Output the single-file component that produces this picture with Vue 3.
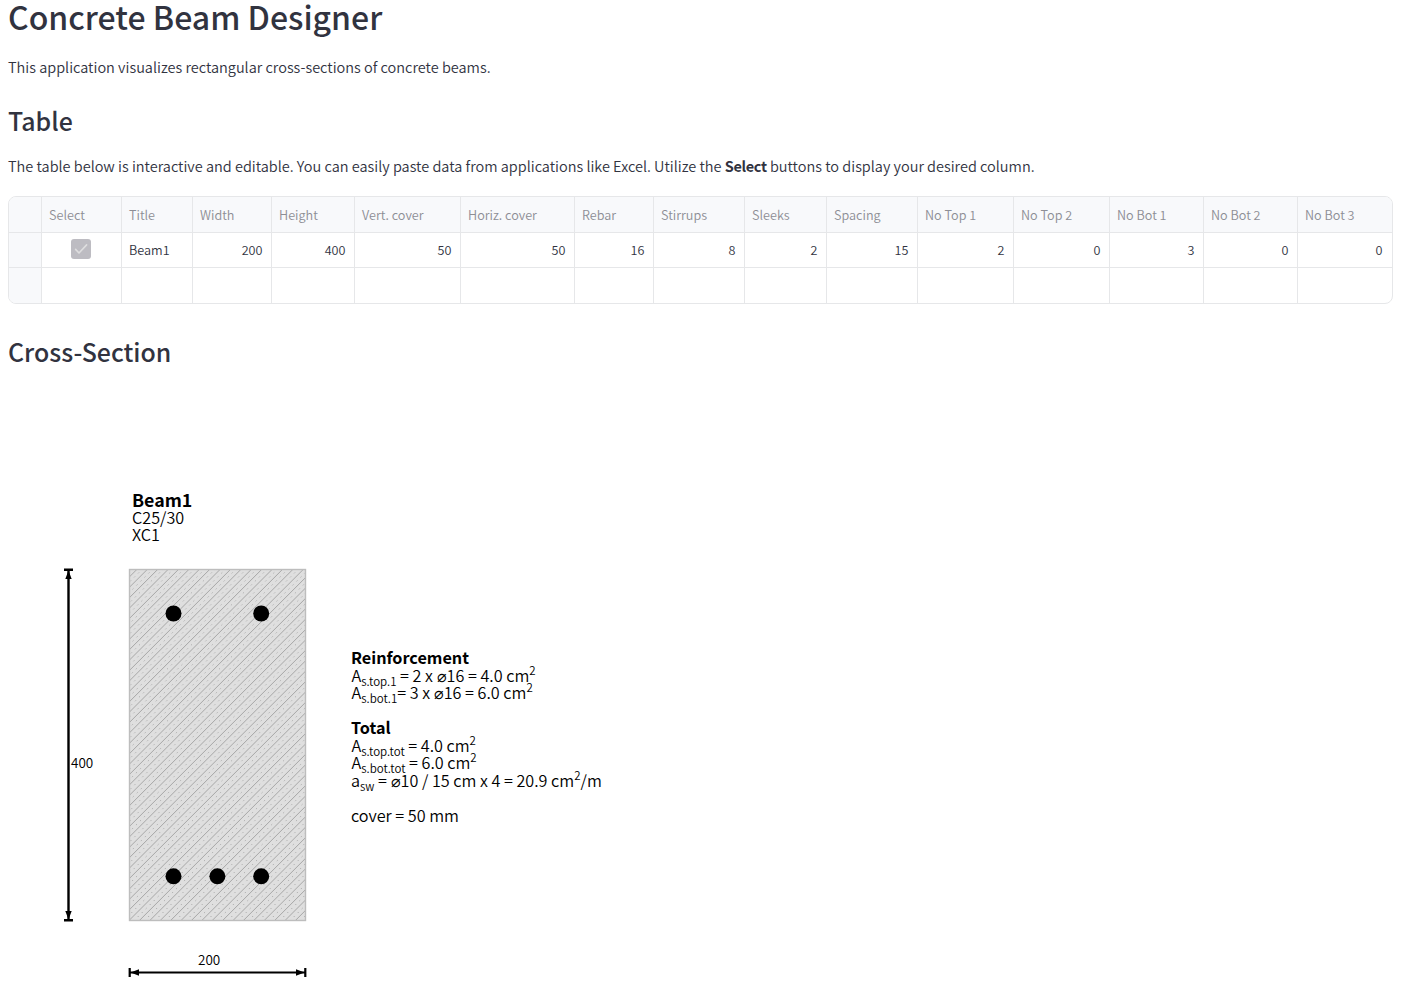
<script setup>
const columns = [
  { name: 'Select' },
  { name: 'Title', value: 'Beam1', text: true },
  { name: 'Width', value: 200 },
  { name: 'Height', value: 400 },
  { name: 'Vert. cover', value: 50 },
  { name: 'Horiz. cover', value: 50 },
  { name: 'Rebar', value: 16 },
  { name: 'Stirrups', value: 8 },
  { name: 'Sleeks', value: 2 },
  { name: 'Spacing', value: 15 },
  { name: 'No Top 1', value: 2 },
  { name: 'No Top 2', value: 0 },
  { name: 'No Bot 1', value: 3 },
  { name: 'No Bot 2', value: 0 },
  { name: 'No Bot 3', value: 0 },
]
const bars = [
  [173.5, 613.5], [261.2, 613.5],
  [173.5, 876.3], [217.4, 876.3], [261.2, 876.3],
]
// Hatch lines run at roughly 45°, alternating solid and dotted
const step = 10.4
let solid = ''
let dotted = ''
for (let i = 0; i < 51; i++) {
  const s = 706.3 + i * step
  solid += `M${(s - 921).toFixed(1)} 921L${(s - 569).toFixed(1)} 569`
  const d = s - step / 2
  dotted += `M${(d - 921).toFixed(1)} 921L${(d - 569).toFixed(1)} 569`
}
</script>

<template>
  <main class="page">
    <h1>Concrete Beam Designer</h1>
    <p class="intro">This application visualizes rectangular cross-sections of concrete beams.</p>
    <h2>Table</h2>
    <p class="hint">The table below is interactive and editable. You can easily paste data from applications like Excel. Utilize the <strong>Select</strong> buttons to display your desired column.</p>

    <div class="grid">
      <div class="cell head"></div>
      <div v-for="c in columns" :key="c.name" class="cell head">{{ c.name }}</div>
      <div class="cell marker"></div>
      <div v-for="c in columns" :key="c.name" class="cell data" :class="{ num: !c.text, check: c.name === 'Select' }">
        <svg v-if="c.name === 'Select'" class="box" width="20" height="20" viewBox="0 0 20 20">
          <rect width="20" height="20" rx="3" fill="#bdbcc2" />
          <path d="M4.6 10.4 L8 14 L15.6 5.9" fill="none" stroke="#dededf" stroke-width="1.6" stroke-linecap="round" stroke-linejoin="round" />
        </svg>
        <template v-else>{{ c.value }}</template>
      </div>
      <div class="cell marker last"></div>
      <div v-for="c in columns" :key="c.name" class="cell last"></div>
    </div>

    <h2 class="section">Cross-Section</h2>

    <svg class="drawing" width="700" height="588" viewBox="0 400 700 588">
      <defs>
        <clipPath id="section"><rect x="129.5" y="569.5" width="176" height="351" /></clipPath>
      </defs>
      <rect x="129.5" y="569.5" width="176" height="351" fill="#dfdfdf" />
      <g clip-path="url(#section)" fill="none">
        <path :d="solid" stroke="#a0a0a0" stroke-width="0.9" />
        <path :d="dotted" stroke="#b0b0b0" stroke-width="1" stroke-dasharray="1.4 4.25" />
      </g>
      <rect x="129.5" y="569.5" width="176" height="351" fill="none" stroke="#bdbdbd" stroke-width="1.4" />
      <circle v-for="(b, i) in bars" :key="i" :cx="b[0]" :cy="b[1]" r="8" />

      <path d="M68.5 570V920M64 569.7H73M64 920.2H73" stroke="#000" stroke-width="2.4" />
      <path d="M68.5 570.5L71.7 579H65.3ZM68.5 919.5L71.7 911H65.3Z" />
      <path d="M130 972.5H305M129.7 968V977M305.3 968V977" stroke="#000" stroke-width="2.2" />
      <path d="M130.5 972.5L139 969.3V975.7ZM304.5 972.5L296 969.3V975.7Z" />

      <text x="71" y="768" class="dim">400</text>
      <text x="198" y="965" class="dim">200</text>

      <text x="132" y="507" class="title">Beam1</text>
      <text x="132" y="524">C25/30</text>
      <text x="132" y="541">XC1</text>

      <text x="351" y="664" class="bold">Reinforcement</text>
      <text x="351.5" y="682">A<tspan class="s" dy="3.5">s.top.1</tspan><tspan dy="-3.5"> = 2 x <tspan class="thin">⌀</tspan>16 = 4.0 cm</tspan><tspan class="s" dy="-7">2</tspan></text>
      <text x="351.5" y="699">A<tspan class="s" dy="3.5">s.bot.1</tspan><tspan dy="-3.5">= 3 x <tspan class="thin">⌀</tspan>16 = 6.0 cm</tspan><tspan class="s" dy="-7">2</tspan></text>
      <text x="351" y="734" class="bold">Total</text>
      <text x="351.5" y="752">A<tspan class="s" dy="3.5">s.top.tot</tspan><tspan dy="-3.5"> = 4.0 cm</tspan><tspan class="s" dy="-7">2</tspan></text>
      <text x="351.5" y="769">A<tspan class="s" dy="3.5">s.bot.tot</tspan><tspan dy="-3.5"> = 6.0 cm</tspan><tspan class="s" dy="-7">2</tspan></text>
      <text x="351" y="787">a<tspan class="s" dy="3.5">sw</tspan><tspan dy="-3.5"> = <tspan class="thin">⌀</tspan>10 / 15 cm x 4 = 20.9 cm</tspan><tspan class="s" dy="-7">2</tspan><tspan dy="7">/m</tspan></text>
      <text x="351" y="822">cover = 50 mm</text>
    </svg>
  </main>
</template>

<style>
html, body { background: #fff; overflow: hidden; }
</style>

<style scoped>
.page {
  box-sizing: border-box;
  height: 988px;
  padding: 0 8px;
  overflow: hidden;
  color: #31333f;
  font-family: "Noto Sans CJK SC", "Noto Sans", sans-serif;
  font-size: 14.5px;
  font-weight: 350;
}
h1, h2, p { margin: 0; white-space: nowrap; }
h1 { height: 55px; font-size: 32px; line-height: 32px; font-weight: 500; }
.intro { height: 45px; line-height: 24px; }
h2 { height: 54px; font-size: 24.9px; line-height: 40px; font-weight: 500; }
.hint { height: 42px; line-height: 24px; }
.hint strong { font-weight: 700; letter-spacing: -0.35px; }
.grid {
  display: grid;
  grid-template-columns: 33px 80px 71px 79px 83px 106px 114px 79px 91px 82px 91px 96px 96px 94px 94px 94px;
  grid-template-rows: 36px 35px 35px;
  width: 1383px;
  border: 1px solid #e6e7e9;
  border-radius: 8px;
  overflow: hidden;
  font-size: 12.65px;
}
.cell {
  box-sizing: border-box;
  padding: 0 8.5px 0 7px;
  border-right: 1px solid #e6e7e9;
  border-bottom: 1px solid #e6e7e9;
  line-height: 35px;
  white-space: nowrap;
}
.cell:nth-child(16n) { border-right: 0; padding-right: 9.5px; }
.head { background: #f8f9fb; color: #8d8e95; }
.data { line-height: 33px; }
.marker { background: #f8f9fb; }
.num { text-align: right; }
.check { display: flex; justify-content: center; align-items: flex-start; padding: 6px 1px 0 0; }
.last { border-bottom: 0; }
.section { margin-top: 27px; height: 69px; }
.drawing { display: block; margin-left: -8px; }
.drawing text { font-size: 16.2px; fill: #000; white-space: pre; }
.drawing .s { font-size: 11.5px; }
.drawing .thin { font-weight: 100; }
.drawing .dim { font-size: 13.5px; }
.drawing .bold { font-weight: 700; }
.drawing .title { font-weight: 700; font-size: 17.8px; }
</style>
